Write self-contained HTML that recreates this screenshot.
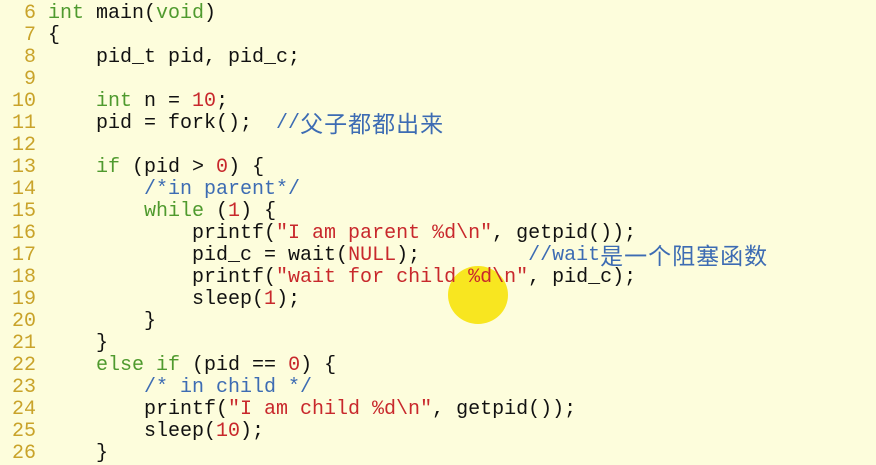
<!DOCTYPE html>
<html><head><meta charset="utf-8"><style>
html,body{margin:0;padding:0;}
body{width:876px;height:462px;background:#fdfddc;overflow:hidden;position:relative;}
pre{margin:0;position:absolute;left:0;top:3px;font-family:"Liberation Mono","DejaVu Sans Mono",monospace;font-size:20px;line-height:22px;color:#111;}
.n{color:#c9a32a;display:inline-block;width:36px;text-align:right;margin-right:12px;}
.k{color:#4f9a2e;}
.s{color:#c8282c;}
.c{color:#3d6cb3;}
.z{font-family:"Noto Sans CJK SC",sans-serif;font-size:23px;letter-spacing:1px;line-height:22px;height:22px;display:inline-block;vertical-align:top;position:relative;top:-2px;}
#dot{position:absolute;left:448px;top:266px;width:60px;height:58px;border-radius:50%;background:#f8e620;}
</style></head><body>
<div id="dot"></div>
<pre><span class="n">6</span><span class="k">int</span> main(<span class="k">void</span>)
<span class="n">7</span>{
<span class="n">8</span>    pid_t pid, pid_c;
<span class="n">9</span>
<span class="n">10</span>    <span class="k">int</span> n = <span class="s">10</span>;
<span class="n">11</span>    pid = fork();  <span class="c">//<span class="z">父子都都出来</span></span>
<span class="n">12</span>
<span class="n">13</span>    <span class="k">if</span> (pid &gt; <span class="s">0</span>) {
<span class="n">14</span>        <span class="c">/*in parent*/</span>
<span class="n">15</span>        <span class="k">while</span> (<span class="s">1</span>) {
<span class="n">16</span>            printf(<span class="s">"I am parent %d\n"</span>, getpid());
<span class="n">17</span>            pid_c = wait(<span class="s">NULL</span>);         <span class="c">//wait<span class="z">是一个阻塞函数</span></span>
<span class="n">18</span>            printf(<span class="s">"wait for child %d\n"</span>, pid_c);
<span class="n">19</span>            sleep(<span class="s">1</span>);
<span class="n">20</span>        }
<span class="n">21</span>    }
<span class="n">22</span>    <span class="k">else if</span> (pid == <span class="s">0</span>) {
<span class="n">23</span>        <span class="c">/* in child */</span>
<span class="n">24</span>        printf(<span class="s">"I am child %d\n"</span>, getpid());
<span class="n">25</span>        sleep(<span class="s">10</span>);
<span class="n">26</span>    }
</pre>
</body></html>
